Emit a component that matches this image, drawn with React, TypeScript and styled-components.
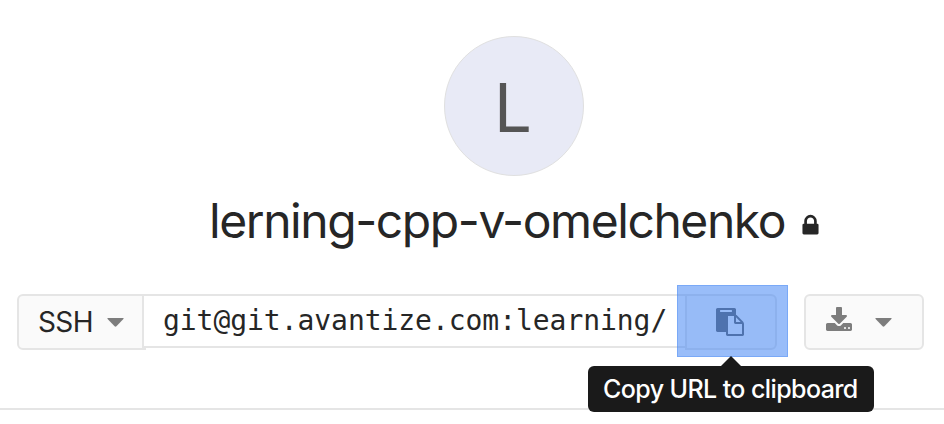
import React from "react";
import styled, { createGlobalStyle } from "styled-components";

const GlobalStyle = createGlobalStyle`
  *, *::before, *::after { box-sizing: border-box; }
  body { margin: 0; background: #fff; color: #262626; font-family: Inter, "Liberation Sans", sans-serif; }
`;

const Page = styled.main`
  width: 944px;
  height: 424px;
  overflow: hidden;
`;

const ProjectHeader = styled.section`
  height: 410px;
  padding-top: 36px;
  border-bottom: 2px solid #e5e5e5;
`;

const Avatar = styled.div`
  width: 140px;
  height: 140px;
  margin-left: 444px;
  display: flex;
  align-items: center;
  justify-content: center;
  padding: 3px 2px 0 0;
  border: 1px solid #e0e0e0;
  border-radius: 50%;
  background: #e8eaf6;
  color: #555;
  font-size: 67px;
  line-height: 1;
`;

const TitleRow = styled.div`
  display: flex;
  height: 92px;
  margin: 0 0 26px 209px;
`;

const Title = styled.h1`
  width: 589px;
  margin: 0;
  font-size: 48px;
  font-weight: 400;
  line-height: 90px;
  letter-spacing: -1.43px;
  white-space: nowrap;
`;

const Icon = styled.svg<{ $size: number }>`
  display: block;
  flex: none;
  width: ${({ $size }) => $size}px;
  height: ${({ $size }) => $size}px;
  fill: currentColor;
`;

const LockIcon = styled(Icon)`
  margin-top: 37px;
`;

const Controls = styled.div`
  display: flex;
  align-items: flex-start;
  margin-left: 17px;
`;

const Button = styled.button<{ $width: number; $radius: string }>`
  display: flex;
  align-items: center;
  flex: none;
  width: ${({ $width }) => $width}px;
  height: 56px;
  padding: 0 19px;
  border: 2px solid #e5e5e5;
  border-radius: ${({ $radius }) => $radius};
  background: #fafafa;
  color: #262626;
  font: 400 28px Inter, "Liberation Sans", sans-serif;
  text-align: left;
`;

const Protocol = styled.span`
  width: 69px;
  letter-spacing: -0.6px;
`;

const Caret = styled.svg`
  width: 17px;
  height: 9px;
  flex: none;
  fill: #7d7d7d;
`;

const UrlField = styled.div`
  flex: none;
  width: 544px;
  height: 54px;
  margin-left: -4px;
  padding-left: 19px;
  border: 2px solid #e5e5e5;
  border-right: 0;
  background: #fff;
  font: 28px/49px "DejaVu Sans Mono", monospace;
  letter-spacing: -0.05px;
  white-space: nowrap;
`;

const CopyGroup = styled.div`
  position: relative;
  flex: none;
  width: 92px;
  margin-left: -1px;
`;

const CopyButton = styled(Button)`
  padding: 0 29px;
  color: #5c5c5c;
`;

const Highlight = styled.div`
  position: absolute;
  inset: -9px -11px -7px -8px;
  border: 1px solid rgba(66, 133, 244, 0.35);
  background: rgba(66, 133, 244, 0.54);
`;

const Tooltip = styled.div`
  position: absolute;
  top: 72px;
  left: -97px;
  width: 286px;
  height: 46px;
  padding-left: 15px;
  border-radius: 6px;
  background: #1a1a1a;
  color: #fff;
  font-size: 25px;
  font-weight: 500;
  line-height: 46px;
  letter-spacing: -0.59px;
  white-space: nowrap;

  &::before {
    content: "";
    position: absolute;
    top: -10px;
    left: 133px;
    border: solid transparent;
    border-width: 0 10px 10px;
    border-bottom-color: #1a1a1a;
  }
`;

const DownloadButton = styled(Button)`
  margin-left: 27px;
  color: #7d7d7d;
`;

const DownloadIcon = styled(Icon)`
  margin: -2px 22px 0 0;
`;

function DownCaret() {
  return (
    <Caret viewBox="0 0 17 9">
      <path d="M1 0h15q1.1.1.4 1L9.4 8.2q-.9.9-1.8 0L.6 1Q-.1.1 1 0Z" />
    </Caret>
  );
}

export default function App() {
  return (
    <Page>
      <GlobalStyle />
      <ProjectHeader>
        <Avatar>L</Avatar>
        <TitleRow>
          <Title>lerning-cpp-v-omelchenko</Title>
          <LockIcon $size={25} viewBox="0 0 1792 1792">
            <path d="M640 768h512v-192q0-106-75-181t-181-75-181 75-75 181v192zm832 96v576q0 40-28 68t-68 28h-960q-40 0-68-28t-28-68v-576q0-40 28-68t68-28h32v-192q0-184 132-316t316-132 316 132 132 316v192h32q40 0 68 28t28 68z" />
          </LockIcon>
        </TitleRow>
        <Controls>
          <Button $width={129} $radius="6px 0 0 6px">
            <Protocol>SSH</Protocol>
            <DownCaret />
          </Button>
          <UrlField>git@git.avantize.com:learning/</UrlField>
          <CopyGroup>
            <CopyButton $width={92} $radius="0 6px 6px 0" aria-label="Copy URL to clipboard">
              <Icon $size={28} viewBox="0 0 1792 1792">
                <path d="M768 1664h896v-640h-416q-40 0-68-28t-28-68v-416h-384v1152zm256-1440v-64q0-13-9.5-22.5t-22.5-9.5h-704q-13 0-22.5 9.5t-9.5 22.5v64q0 13 9.5 22.5t22.5 9.5h704q13 0 22.5-9.5t9.5-22.5zm256 672h299l-299-299v299zm512 128v672q0 40-28 68t-68 28h-960q-40 0-68-28t-28-68v-160h-544q-40 0-68-28t-28-68v-1344q0-40 28-68t68-28h1088q40 0 68 28t28 68v328q21 13 36 28l408 408q28 28 48 76t20 88z" />
              </Icon>
            </CopyButton>
            <Highlight />
            <Tooltip>Copy URL to clipboard</Tooltip>
          </CopyGroup>
          <DownloadButton $width={120} $radius="6px" aria-label="Download">
            <DownloadIcon $size={28} viewBox="0 0 1792 1792">
              <path d="M1344 1344q0-26-19-45t-45-19-45 19-19 45 19 45 45 19 45-19 19-45zm256 0q0-26-19-45t-45-19-45 19-19 45 19 45 45 19 45-19 19-45zm128-224v320q0 40-28 68t-68 28h-1472q-40 0-68-28t-28-68v-320q0-40 28-68t68-28h465l135 136q58 56 136 56t136-56l136-136h464q40 0 68 28t28 68zm-325-569q17 41-14 70l-448 448q-18 19-45 19t-45-19l-448-448q-31-29-14-70 17-39 59-39h256v-448q0-26 19-45t45-19h256q26 0 45 19t19 45v448h256q42 0 59 39z" />
            </DownloadIcon>
            <DownCaret />
          </DownloadButton>
        </Controls>
      </ProjectHeader>
    </Page>
  );
}
